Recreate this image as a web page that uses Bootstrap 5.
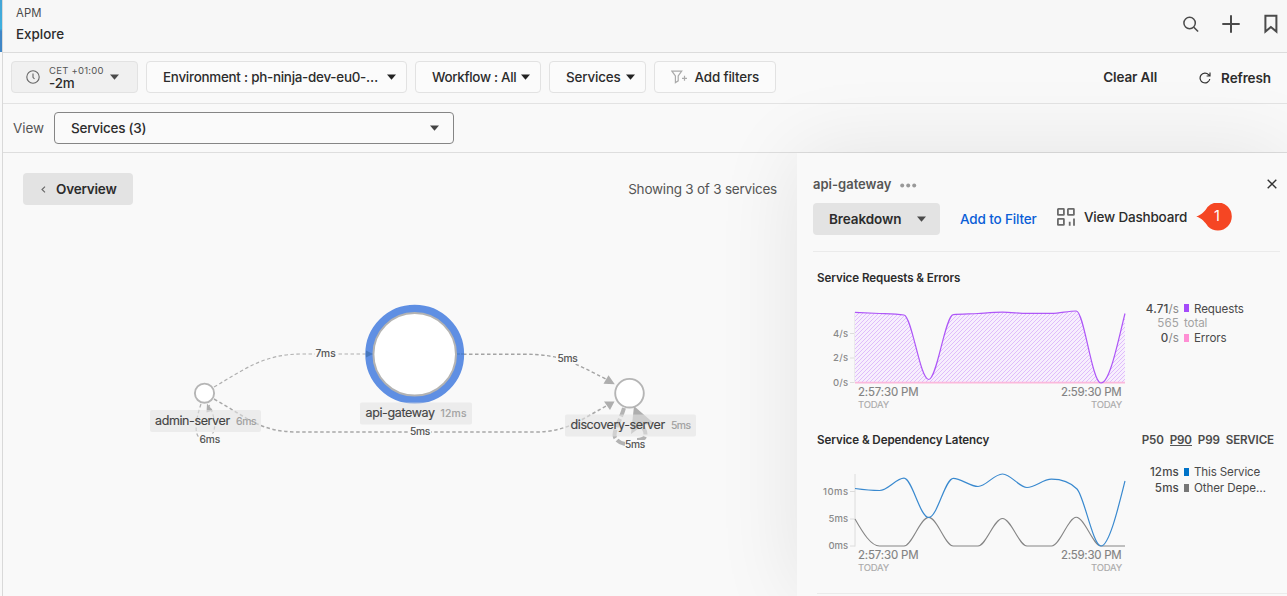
<!DOCTYPE html>
<html lang="en">
<head>
<meta charset="utf-8">
<meta name="viewport" content="width=device-width, initial-scale=1">
<title>APM Explore</title>
<link href="https://cdn.jsdelivr.net/npm/bootstrap@5.3.0/dist/css/bootstrap.min.css" rel="stylesheet">
<style>
body{font-family:Inter,"Liberation Sans",sans-serif;font-size:13.5px;line-height:18px;color:#2c2c2c;background:#f9f9f9;height:596px;overflow:hidden;letter-spacing:-.1px}
svg{display:block;flex:none}
svg text{font-family:Inter,"Liberation Sans",sans-serif}
.rail{width:3px;border-right:1px solid #d9d9d9;flex:none}
.rail i{display:block;width:2px;height:52px;background:linear-gradient(#45a5d6,#3db0df 55%,#3f86c6 60%)}
.topbar{height:53px;background:#f7f7f7;border-bottom:1px solid #dcdcdc;padding:4px 8px 0 13px;position:relative;z-index:3}
.crumb{font-size:11.3px;color:#4a4a4a;line-height:18px;letter-spacing:.15px}
.ttl{font-size:13.4px;line-height:24px;letter-spacing:0}
.filters{height:51px;border-bottom:1px solid #e3e3e3;padding:8px 16px 0 8px}
.fbtn{height:32px;border:1px solid #e2e2e2;border-radius:4px;background:#fbfbfb;font-size:13.4px;white-space:nowrap}
.fbtn.time{background:#f0f0f0;width:127px}
.tz{font-size:9.5px;line-height:11px;color:#555;letter-spacing:.25px;padding-top:1px}
.w5{font-weight:500}.w6{font-weight:600}
.view{height:49px;border-bottom:1px solid #dedede;padding:8px 0 0 10px}
.sel{width:400px;height:32px;border:1px solid #858585;border-radius:4px;padding:0 14px 0 16px;background:#fafafa}
.gbtn{background:#e3e3e3;border-radius:4px;height:32px;font-weight:600}
.mapbox{width:794px;height:443px;position:relative;overflow:hidden}
.maphead{padding:20px 20px 0 20px;position:relative;z-index:1}
.mapbox>svg{position:absolute;left:0;top:0}
.side{width:490px;height:443px;background:#f9f9f9;box-shadow:0 0 80px rgba(0,0,0,.09);padding:0 0 0 16px;z-index:2;position:relative}
.rule{height:1px;background:#ebebeb}
.h{font-size:11.6px;font-weight:600;line-height:16px;letter-spacing:-.08px}
.leg{font-size:11.6px;color:#4a4a4a;line-height:16px;width:128px;display:grid;grid-template-columns:36px 6px 1fr;column-gap:5px}
.leg .num{text-align:right;white-space:nowrap;justify-self:end;grid-column:1;letter-spacing:.15px}
.leg i{width:5px;height:8px;align-self:center}
.leg i + span{margin-left:-1px}
.dim{color:#a3a3a3}.unit{color:#8a8a8a}
</style>
</head>
<body class="d-flex">
<div class="rail"><i></i></div>
<main class="flex-grow-1">
  <header class="topbar d-flex justify-content-between">
    <div><div class="crumb">APM</div><div class="ttl w5">Explore</div></div>
    <svg width="104" height="28" viewBox="1175 10 104 28" fill="none" stroke="#4b4b4b" style="margin-top:6px">
      <circle cx="1189.6" cy="23" r="5.700" stroke-width="1.500"/><path d="M1193.8 27.300l4.300 4.200" stroke-width="1.600"/>
      <path d="M1222.300 24h17.400M1231 15.300v17.400" stroke-width="2"/>
      <path d="M1265.400 15.800h11v15.800l-5.500-4.600-5.500 4.600z" stroke-width="2"/>
    </svg>
  </header>
  <div class="filters d-flex">
    <div class="fbtn time d-flex align-items-center">
      <svg width="14" height="14" viewBox="0 0 14 14" fill="none" stroke="#666" stroke-width="1.1" style="margin-left:14px"><circle cx="7" cy="7" r="6.2"/><path d="M7 3.500V7.300l1.500 1.700"/></svg>
      <div style="margin-left:9px"><div class="tz">CET +01:00</div><div style="line-height:15px" class="w5">-2m</div></div>
      <svg width="9" height="6" style="margin-left:6px"><path d="M0 .5h9L4.500 5.800z" fill="#4a4a4a"/></svg>
    </div>
    <div class="fbtn w5 d-flex align-items-center justify-content-between ms-2" style="width:261px;padding:0 10px 0 16px"><span style="letter-spacing:-.25px">Environment : ph-ninja-dev-eu0-…</span><svg width="9" height="6"><path d="M0 .5h9L4.500 5.800z" fill="#222"/></svg></div>
    <div class="fbtn w5 d-flex align-items-center justify-content-between ms-2" style="width:126px;padding:0 10px 0 16px"><span style="letter-spacing:-.3px">Workflow : All</span><svg width="9" height="6"><path d="M0 .5h9L4.500 5.800z" fill="#222"/></svg></div>
    <div class="fbtn w5 d-flex align-items-center justify-content-between ms-2" style="width:97px;padding:0 10px 0 16px"><span style="letter-spacing:-.15px">Services</span><svg width="9" height="6"><path d="M0 .5h9L4.500 5.800z" fill="#222"/></svg></div>
    <div class="fbtn w5 d-flex align-items-center justify-content-between ms-2" style="width:122px;padding:0 16px"><svg width="17" height="14" viewBox="0 0 17 14" fill="none" stroke="#aaa" stroke-width="1.2"><path d="M.9 1.200h9.800L7.200 6v4.800L4.400 12.600V6zM13.500 5.800v5M11 8.300h5"/></svg><span style="letter-spacing:-.17px">Add filters</span></div>
    <div class="ms-auto d-flex align-items-center w6" style="height:32px"><span style="letter-spacing:-.13px">Clear All</span>
      <svg width="12" height="12" viewBox="0 0 12 12" fill="none" stroke="#333" stroke-width="1.2" style="margin:2px 10px 0 42px"><path d="M10.800 7A4.900 4.900 0 1 1 9.600 2.700L11 4M11 .6V4H7.600"/></svg><span style="padding-top:1px">Refresh</span></div>
  </div>
  <div class="view d-flex"><div style="line-height:32px;width:41px;color:#555">View</div>
    <div class="sel w5 d-flex align-items-center justify-content-between"><span style="letter-spacing:-.25px">Services (3)</span><svg width="9" height="6"><path d="M0 .5h9L4.500 5.800z" fill="#444"/></svg></div></div>
  <div class="d-flex">
    <section class="mapbox">
      <div class="maphead d-flex justify-content-between align-items-center">
        <div class="gbtn d-flex align-items-center" style="width:110px;padding-left:18px"><svg width="5" height="7" fill="none" stroke="#666" stroke-width="1.1"><path d="M4 .7L1 3.500l3 2.800"/></svg><span style="margin-left:10px;letter-spacing:-.2px">Overview</span></div>
        <span style="color:#555;letter-spacing:-.22px">Showing 3 of 3 services</span>
      </div>
      <svg width="794" height="443" viewBox="3 153 794 443">
        <g fill="none" stroke="#b0b0b0" stroke-width="1.2" stroke-dasharray="3.5 2.5">
          <path d="M214 387C245 369 264 354 302 354H367"/>
          <path d="M463 354.200H523C563 354.200 573 363 608 380" stroke="#a4a4a4" stroke-width="1.4"/>
          <path d="M214 399C248 418 260 432 298 432H535C567 432 580 420 608 405" stroke="#a8a8a8" stroke-width="1.5"/>
          <path d="M201 404C195 421 194 437 201 438H206C218 436 216 418 209 405"/>
          <path d="M624 408C620 422 611 434 616 439C620 444 627 445 631 444" stroke-width="4" stroke-dasharray="9 2.500" stroke="#b3b3b3"/>
          <path d="M637 440C647 440 647 434 643 427L639 416" stroke-width="4" stroke-dasharray="9 2.500" stroke="#b3b3b3"/>
        </g>
        <g fill="#aeaeae"><path d="M614.800 384.300l-11.300-.5 5-8.500zM614.500 401.500l-4.500 8.500-6-8.500zM207 403.500l5.800 7-6.300 2z"/><path d="M634 406l20 17.500-10 1-13 9.500z"/></g>
        <circle cx="414.700" cy="354.300" r="45.200" fill="#fff" stroke="#5f8fe3" stroke-width="8.500"/>
        <circle cx="414.700" cy="354.300" r="41.300" fill="#fff" stroke="#b3b3b3" stroke-width="2"/>
        <path d="M366 350.500l7 3.500-7 3.500z" fill="#4778bd"/><path d="M457 354h7" stroke="#4778bd" stroke-dasharray="3 1"/>
        <circle cx="204.500" cy="393.200" r="9.600" fill="#fff" stroke="#b5b5b5" stroke-width="1.900"/>
        <circle cx="629.500" cy="393.200" r="14.300" fill="#fff" stroke="#b5b5b5" stroke-width="1.900"/>
        <g fill="#e2e2e2" fill-opacity=".6"><rect x="150" y="410" width="111" height="22" rx="2"/><rect x="360" y="402.500" width="112" height="22" rx="2"/><rect x="565" y="414.500" width="131" height="22" rx="2"/></g>
        <g fill="#f9f9f9"><rect x="315" y="348" width="22" height="12"/><rect x="556" y="352" width="22" height="12"/><rect x="410" y="426" width="21" height="12"/><rect x="199" y="433.500" width="21" height="12"/><rect x="625" y="440" width="20" height="10"/></g>
        <g font-size="12.500" fill="#444" stroke="#444" stroke-width=".15"><text x="155" y="425" textLength="75">admin-server</text><text x="365.500" y="417" textLength="69.500">api-gateway</text><text x="570.500" y="429" textLength="94.500">discovery-server</text></g>
        <g font-size="10.500" fill="#9d9d9d" stroke="#9d9d9d" stroke-width=".15"><text x="236" y="425" textLength="20.500">6ms</text><text x="440.500" y="417" textLength="26">12ms</text><text x="671" y="429" textLength="20">5ms</text></g>
        <g font-size="10.300" fill="#4a4a4a" stroke="#4a4a4a" stroke-width=".15"><text x="315.500" y="357" textLength="20">7ms</text><text x="557.500" y="362" textLength="20">5ms</text><text x="410" y="435" textLength="20">5ms</text><text x="199.500" y="443" textLength="20.500">6ms</text><text x="625" y="448" textLength="20">5ms</text></g>
      </svg>
    </section>
    <aside class="side">
      <div class="d-flex align-items-center justify-content-between" style="padding:20px 10px 0 0;height:42px">
        <div class="d-flex align-items-center"><span class="w6" style="color:#555;font-size:13px;letter-spacing:0">api-gateway</span><svg width="17" height="5" style="margin:3px 0 0 9px" fill="#999"><circle cx="2.200" cy="2.500" r="2"/><circle cx="8.200" cy="2.500" r="2"/><circle cx="14.200" cy="2.500" r="2"/></svg></div>
        <svg width="10" height="10" stroke="#333" stroke-width="1.400"><path d="M.7.7l8.600 8.600M9.300.7L.7 9.300"/></svg>
      </div>
      <div class="d-flex" style="height:56px;padding-top:8px">
        <div class="gbtn d-flex align-items-center justify-content-between" style="width:127px;padding:0 14px 0 16px"><span>Breakdown</span><svg width="9" height="6"><path d="M0 .5h9L4.500 5.800z" fill="#4a4a4a"/></svg></div>
        <span class="w5" style="color:#0b5ed7;line-height:32px;margin-left:20px;width:96px;letter-spacing:-.15px">Add to Filter</span>
        <svg width="20" height="20" viewBox="0 0 20 20" fill="none" stroke="#6b6b6b" stroke-width="1.800" style="margin-top:4px"><rect x="1.900" y="1.900" width="6" height="6" rx=".5"/><rect x="11.900" y="1.900" width="6" height="6" rx=".5"/><rect x="1.900" y="11.900" width="6" height="6" rx=".5"/><path d="M13.700 14.800v4M18 11.400v7.400"/></svg>
        <span class="w5" style="line-height:28px;margin-left:8px;width:112px;white-space:nowrap;letter-spacing:-.2px">View Dashboard</span>
        <svg width="36" height="30" viewBox="1197 203 36 30"><path d="M1197.300 216.500C1203 214.500 1206 211 1208.500 207A14 14 0 1 1 1209 226.500C1206 222 1203 218.500 1197.300 216.500Z" fill="#f54623"/><text x="1218" y="220.500" font-size="14.500" fill="#fff" text-anchor="middle">1</text></svg>
      </div>
      <div class="rule" style="margin-right:7px"></div>
      <div class="h" style="margin:18px 0 1px 4px">Service Requests &amp; Errors</div>
      <div class="d-flex">
        <svg width="324" height="124" viewBox="813 287 324 124">
          <defs><pattern id="hatch" width="4" height="4" patternUnits="userSpaceOnUse"><path d="M-1 1L1-1M0 4L4 0M3 5L5 3" stroke="#dcb8fa" stroke-width=".9"/></pattern></defs>
          <path d="M855 312v71M850 333.500h4M850 358h4M850 382.500h4" stroke="#ddd" fill="none"/>
          <path d="M855 312.300L879.500 313.500C888 313.800 896 313.800 904 315C912 316.500 920 379.500 928.700 379.500C937 379.500 945 315.700 953.300 314.700C961 313.800 970 314 978 313.500S994 312.200 1002.500 312.200S1019 313.400 1027 313.400H1051.500C1060 313.400 1068 311 1076.300 311C1084 311 1092 383 1101 383S1118 341 1125 313.500V383H855Z" fill="#f7effd"/>
          <path d="M855 312.300L879.500 313.500C888 313.800 896 313.800 904 315C912 316.500 920 379.500 928.700 379.500C937 379.500 945 315.700 953.300 314.700C961 313.800 970 314 978 313.500S994 312.200 1002.500 312.200S1019 313.400 1027 313.400H1051.500C1060 313.400 1068 311 1076.300 311C1084 311 1092 383 1101 383S1118 341 1125 313.500V383H855Z" fill="url(#hatch)"/>
          <path d="M855 382.600H1125" stroke="#fbb9dc" stroke-width="1.700"/>
          <path d="M855 312.300L879.500 313.500C888 313.800 896 313.800 904 315C912 316.500 920 379.500 928.700 379.500C937 379.500 945 315.700 953.300 314.700C961 313.800 970 314 978 313.500S994 312.200 1002.500 312.200S1019 313.400 1027 313.400H1051.500C1060 313.400 1068 311 1076.300 311C1084 311 1092 383 1101 383S1118 341 1125 313.500" fill="none" stroke="#ae57f7" stroke-width="1.200"/>
          <g font-size="9.500" font-weight="500" fill="#8a8a8a" text-anchor="end"><text x="848" y="337" textLength="15">4/s</text><text x="848" y="361" textLength="15">2/s</text><text x="848" y="386" textLength="15">0/s</text></g>
          <g font-size="11.500" fill="#828282" stroke="#828282" stroke-width=".12"><text x="858" y="396" textLength="60.500">2:57:30 PM</text><text x="1061" y="396" textLength="60.500">2:59:30 PM</text></g>
          <g font-size="9.500" fill="#aaa" stroke="#aaa" stroke-width=".12"><text x="858" y="408" textLength="31">TODAY</text><text x="1091" y="408" textLength="31">TODAY</text></g>
        </svg>
        <div class="leg" style="margin:14px 0 0 6px;height:46px;grid-template-rows:14px 13px 19px"><span class="num"><b class="w5">4.71</b><span class="unit">/s</span></span><i style="background:#a54bfa"></i><span>Requests</span>
          <span class="num dim">565</span><span class="dim" style="grid-column:2/4">total</span>
          <span class="num" style="padding-top:2px"><b class="w5">0</b><span class="unit">/s</span></span><i style="background:#ff8fd4"></i><span style="padding-top:2px">Errors</span></div>
      </div>
      <div class="d-flex justify-content-between" style="margin:21px 13px 0 4px"><span class="h">Service &amp; Dependency Latency</span><span class="h d-flex" style="color:#4a4a4a;gap:6px;letter-spacing:-.13px"><span>P50</span><span style="border-bottom:1px solid #555;height:14px">P90</span><span>P99</span><span>SERVICE</span></span></div>
      <div class="d-flex">
        <svg width="324" height="145" viewBox="813 448 324 145" fill="none">
          <path d="M855 474v72.500M850 491.500h5M850 519h5M850 546h5" stroke="#dcdcdc"/>
          <path d="M855 519C863 533 871 546 879.500 546H904C912 546 920 517.400 928.700 517.400S945 546 953.300 546H978C986 546 994 518.500 1002.500 518.500S1019 546 1027 546H1051.500C1060 546 1068 517.300 1076.300 517.300S1093 546 1101 546H1125" stroke="#858585" stroke-width="1.100"/>
          <path d="M855 488.500C863 489.600 871 490.500 879.500 490.500C888 490.500 896 478.200 904 478.200C912 478.200 920 517.500 928.700 517.500S945 478.300 953.300 478.300C961 478.300 970 486.500 978 486.500S994 474 1002.500 474S1019 487.500 1027 487.500S1043 479.200 1051.500 479.200C1060 479.200 1070 482 1077 489S1093 546 1101 546S1118 509 1125 481" stroke="#3989cf" stroke-width="1.200"/>
          <g font-size="9.500" font-weight="500" fill="#8a8a8a" text-anchor="end"><text x="848" y="495" textLength="25">10ms</text><text x="848" y="522" textLength="19.500">5ms</text><text x="848" y="549" textLength="19.500">0ms</text></g>
          <g font-size="11.500" fill="#828282" stroke="#828282" stroke-width=".12"><text x="858" y="559" textLength="60.500">2:57:30 PM</text><text x="1061" y="559" textLength="60.500">2:59:30 PM</text></g>
          <g font-size="9.500" fill="#aaa" stroke="#aaa" stroke-width=".12"><text x="858" y="571" textLength="31">TODAY</text><text x="1091" y="571" textLength="31">TODAY</text></g>
        </svg>
        <div class="leg" style="margin:16px 0 0 6px;height:32px"><span class="num w5">12ms</span><i style="background:#0073c8"></i><span style="letter-spacing:-.15px">This Service</span><span class="num w5">5ms</span><i style="background:#767676"></i><span>Other Depe…</span></div>
      </div>
      <div class="rule" style="margin:0 0 0 4px"></div>
    </aside>
  </div>
</main>
<script src="https://cdn.jsdelivr.net/npm/bootstrap@5.3.0/dist/js/bootstrap.bundle.min.js"></script>
</body>
</html>
